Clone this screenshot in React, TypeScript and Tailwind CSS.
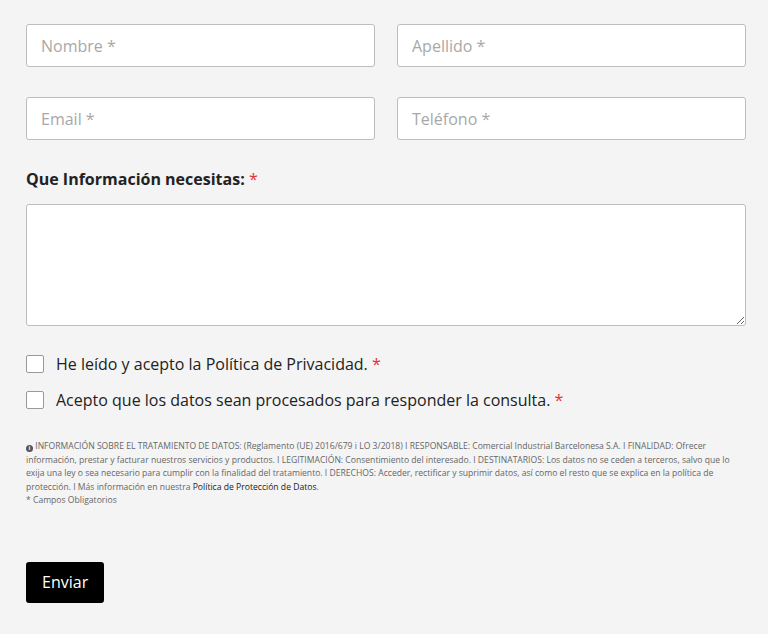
export default function App() {
  const input =
    "h-[43px] w-full rounded-[3px] border border-[#bdbdbd] bg-white px-[14px] text-[16px] text-[#333] placeholder:text-[#a8a8a8] outline-none";
  return (
    <div className="min-h-[634px] bg-[#f4f4f4] pl-[26px] pr-[22px] pt-[24px] pb-[28px] text-[#222]" style={{ fontFamily: '"Open Sans", sans-serif' }}>
      <div className="grid grid-cols-2 gap-x-[22px] gap-y-[30px]">
        <input className={input} placeholder="Nombre *" />
        <input className={input} placeholder="Apellido *" />
        <input className={input} placeholder="Email *" />
        <input className={input} placeholder="Teléfono *" />
      </div>
      <div className="mt-[27px] text-[16px] font-bold leading-[24px]">
        Que Información necesitas: <span className="font-normal text-[#d33]">*</span>
      </div>
      <textarea className="mt-[13px] block h-[122px] w-full rounded-[3px] border border-[#bdbdbd] bg-white" />
      <div className="mt-[26px] flex flex-col gap-[12px] text-[16px] leading-[24px]">
        <label className="flex items-center gap-[12px]">
          <span className="h-[18px] w-[18px] rounded-[2px] border border-[#999] bg-white" />
          <span>He leído y acepto la Política de Privacidad. <span className="text-[#d33]">*</span></span>
        </label>
        <label className="flex items-center gap-[12px]">
          <span className="h-[18px] w-[18px] rounded-[2px] border border-[#999] bg-white" />
          <span>Acepto que los datos sean procesados para responder la consulta. <span className="text-[#d33]">*</span></span>
        </label>
      </div>
      <div className="mt-[28px] text-[8.6px] leading-[13.5px] text-[#666]">
        <p>
          <span className="inline-block h-[7px] w-[7px] rounded-full bg-[#555] text-center align-[-1px] text-[6px] font-bold leading-[7px] text-white">i</span>{" "}
          INFORMACIÓN SOBRE EL TRATAMIENTO DE DATOS: (Reglamento (UE) 2016/679 i LO 3/2018) I RESPONSABLE: Comercial Industrial Barcelonesa S.A. I FINALIDAD: Ofrecer información, prestar y facturar nuestros servicios y productos. I LEGITIMACIÓN: Consentimiento del interesado. I DESTINATARIOS: Los datos no se ceden a terceros, salvo que lo exija una ley o sea necesario para cumplir con la finalidad del tratamiento. I DERECHOS: Acceder, rectificar y suprimir datos, así como el resto que se explica en la política de protección. I Más información en nuestra <span className="text-[#222]">Política de Protección de Datos</span>.
        </p>
        <p>* Campos Obligatorios</p>
      </div>
      <button className="mt-[54px] h-[41px] rounded-[3px] bg-black px-[16px] text-[16px] text-white">Enviar</button>
    </div>
  );
}
